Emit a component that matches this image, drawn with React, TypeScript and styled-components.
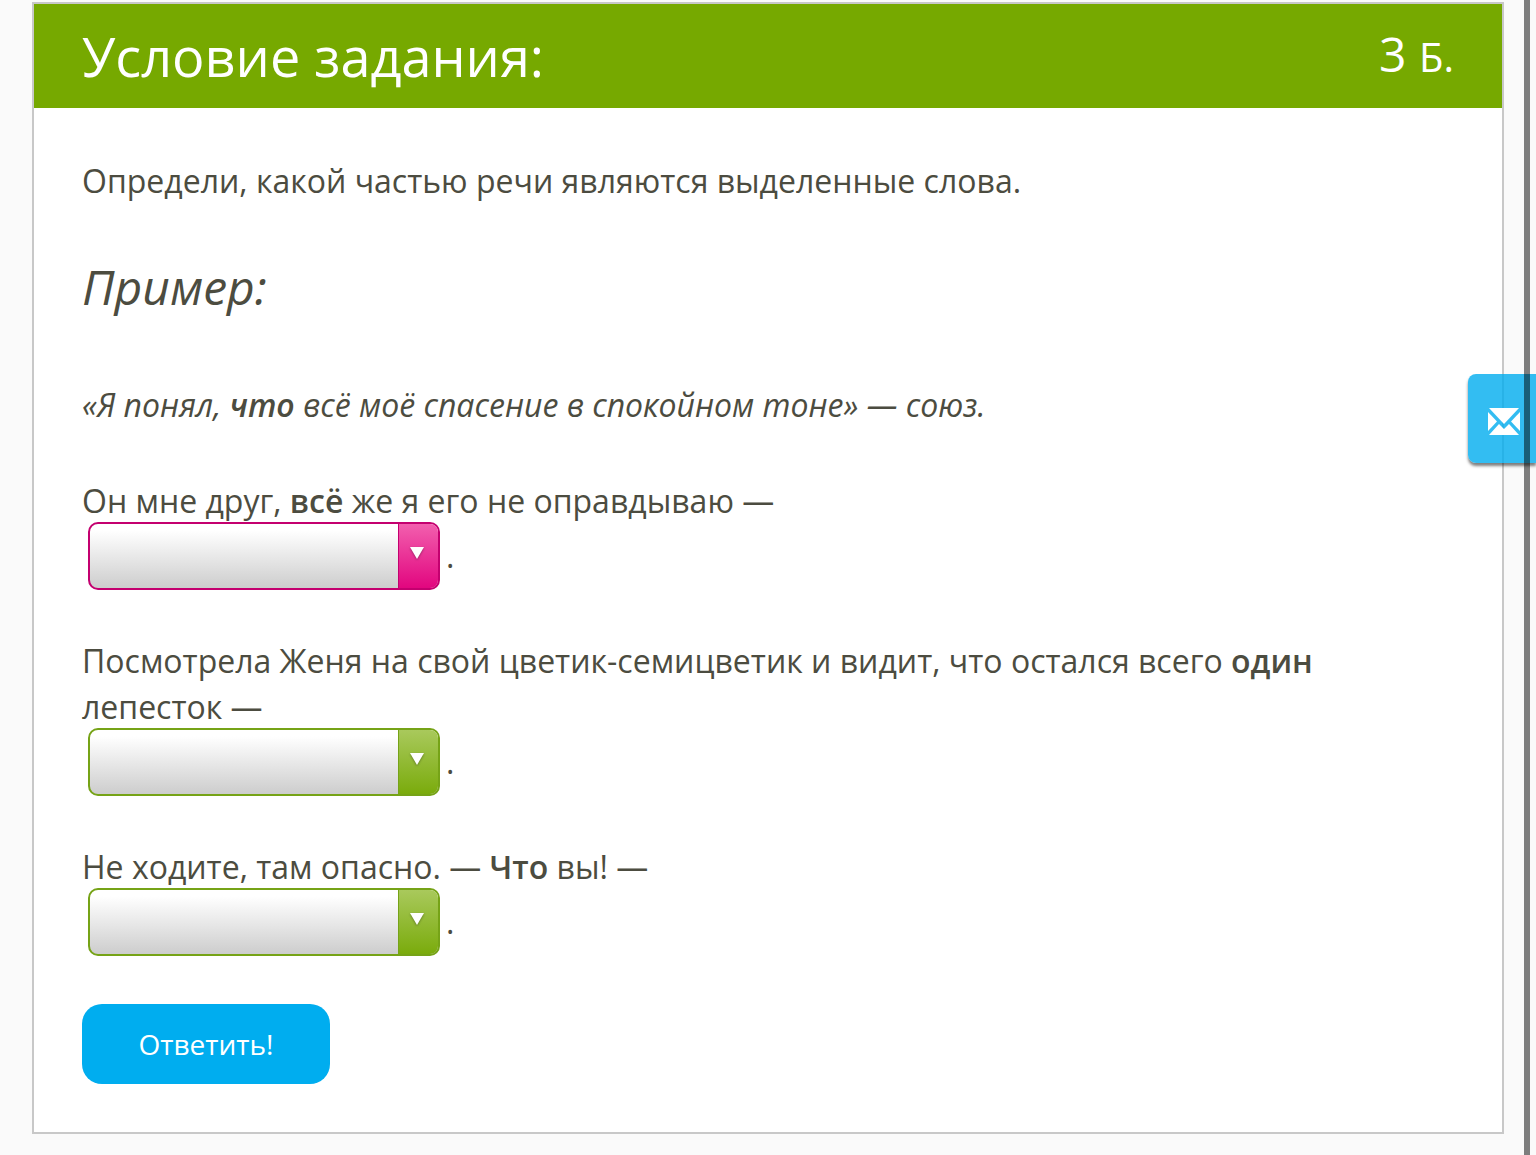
import React, { useState } from "react";
import styled, { createGlobalStyle } from "styled-components";

const GlobalStyle = createGlobalStyle`
  *, *::before, *::after { box-sizing: border-box; }
  body {
    margin: 0;
    background: #fafafa;
    color: #4c4c40;
    font-family: "Open Sans", "Noto Sans", sans-serif;
    font-size: 32px;
    line-height: 46px;
  }
`;

const Page = styled.main`
  padding: 2px 32px 24px;
`;

const Card = styled.section`
  background: #fff;
  border: 2px solid #c8c8c8;
`;

const Header = styled.header`
  display: flex;
  align-items: center;
  justify-content: space-between;
  padding: 12px 48px 13px;
  background: #76a900;
  color: #fff;
  line-height: 76px;
`;

const Title = styled.h1`
  margin: 0;
  font-size: 54px;
  font-weight: 400;
`;

const Points = styled.span`
  font-size: 48px;
`;

const Unit = styled.span`
  font-size: 40px;
`;

const Body = styled.div`
  padding: 50px 48px 48px;
`;

const Paragraph = styled.p`
  margin: 0;

  strong {
    font-weight: 600;
  }
`;

const Example = styled.div`
  margin: 50px 0;
  font-style: italic;
`;

const ExampleTitle = styled.h2`
  margin: 0 0 62px;
  font-size: 48px;
  font-weight: 400;
  line-height: 66px;
`;

const Task = styled.div`
  margin-bottom: 48px;
`;

const Answer = styled.div`
  display: flex;
  align-items: center;
  gap: 6px;
  margin-top: -2px;
  padding-left: 6px;
`;

const palettes = {
  pink: { border: "#c4006f", top: "#f25fae", bottom: "#e2067f" },
  green: { border: "#76a317", top: "#a9c95c", bottom: "#7aab0c" },
};

type Tone = keyof typeof palettes;

const SelectBox = styled.div<{ $tone: Tone }>`
  position: relative;
  display: flex;
  width: 352px;
  height: 68px;
  overflow: hidden;
  border: 2px solid ${(p) => palettes[p.$tone].border};
  border-radius: 10px;
  background: linear-gradient(#fff 10%, #cdcdcd);
`;

const Select = styled.select`
  flex: 1;
  min-width: 0;
  padding: 0 48px 0 12px;
  appearance: none;
  border: 0;
  background: transparent;
  color: inherit;
  font: inherit;
`;

const ArrowPanel = styled.span<{ $tone: Tone }>`
  position: absolute;
  inset: 0 0 0 auto;
  display: flex;
  justify-content: center;
  width: 40px;
  padding: 22px 4px 0 0;
  border-left: 1px solid ${(p) => palettes[p.$tone].border};
  background: linear-gradient(
    ${(p) => palettes[p.$tone].top},
    ${(p) => palettes[p.$tone].bottom}
  );
  pointer-events: none;
`;

const Arrow = styled.svg`
  width: 16px;
  height: 16px;
  filter: drop-shadow(0 1px 1px rgba(0, 0, 0, 0.35));
`;

const SubmitButton = styled.button`
  display: block;
  min-width: 248px;
  height: 80px;
  padding: 0 40px;
  border: 0;
  border-radius: 20px;
  background: #00adef;
  color: #fff;
  font: inherit;
  font-size: 28px;
  cursor: pointer;
`;

const FeedbackButton = styled.button`
  position: fixed;
  top: 374px;
  right: 0;
  display: flex;
  align-items: center;
  width: 68px;
  height: 89px;
  padding: 6px 0 0 20px;
  border: 0;
  border-radius: 8px 0 0 8px;
  background: rgba(0, 173, 239, 0.8);
  box-shadow: 0 3px 3px rgba(0, 0, 0, 0.5);
  cursor: pointer;
`;

const ScrollThumb = styled.div`
  position: fixed;
  inset: 0 6px 0 auto;
  width: 6px;
  background: rgba(0, 0, 0, 0.5);
  pointer-events: none;
`;

function Dropdown({ label, tone }: { label: string; tone: Tone }) {
  const [value, setValue] = useState("");
  return (
    <SelectBox $tone={tone}>
      <Select aria-label={label} value={value} onChange={(e) => setValue(e.target.value)}>
        <option value="" />
        <option value="conj">союз</option>
        <option value="part">частица</option>
        <option value="pron">местоимение</option>
        <option value="num">числительное</option>
        <option value="interj">междометие</option>
      </Select>
      <ArrowPanel $tone={tone}>
        <Arrow viewBox="0 0 16 16" aria-hidden="true">
          <path d="M1 1H15L8 13Z" fill="#fff" />
        </Arrow>
      </ArrowPanel>
    </SelectBox>
  );
}

const tasks: { id: string; word: string; tone: Tone; text: React.ReactNode }[] = [
  {
    id: "friend",
    word: "всё",
    tone: "pink",
    text: <>Он мне друг, <strong>всё</strong> же я его не оправдываю —</>,
  },
  {
    id: "petal",
    word: "один",
    tone: "green",
    text: (
      <>
        Посмотрела Женя на свой цветик-семицветик и видит, что остался всего{" "}
        <strong>один</strong> лепесток —
      </>
    ),
  },
  {
    id: "danger",
    word: "Что",
    tone: "green",
    text: <>Не ходите, там опасно. — <strong>Что</strong> вы! —</>,
  },
];

export default function App() {
  return (
    <>
      <GlobalStyle />
      <Page>
        <Card>
          <Header>
            <Title>Условие задания:</Title>
            <Points>
              3 <Unit>Б.</Unit>
            </Points>
          </Header>
          <Body>
            <Paragraph>Определи, какой частью речи являются выделенные слова.</Paragraph>
            <Example>
              <ExampleTitle>Пример:</ExampleTitle>
              <Paragraph>
                «Я понял, <strong>что</strong> всё моё спасение в спокойном тоне» — союз.
              </Paragraph>
            </Example>
            <form onSubmit={(e) => e.preventDefault()}>
              {tasks.map((task) => (
                <Task key={task.id}>
                  <Paragraph>{task.text}</Paragraph>
                  <Answer>
                    <Dropdown label={task.word} tone={task.tone} />
                    <span>.</span>
                  </Answer>
                </Task>
              ))}
              <SubmitButton type="submit">Ответить!</SubmitButton>
            </form>
          </Body>
        </Card>
      </Page>
      <FeedbackButton type="button" aria-label="Написать сообщение">
        <svg width="32" height="28" viewBox="0 0 32 28" fill="#fff" aria-hidden="true">
          <path d="M1 0H31L16 16Z" />
          <path d="M0 4L9 13.500L0 23Z" />
          <path d="M32 4L23 13.500L32 23Z" />
          <path d="M1 27L11 16L16 21L21 16L31 27Z" />
        </svg>
      </FeedbackButton>
      <ScrollThumb />
    </>
  );
}
